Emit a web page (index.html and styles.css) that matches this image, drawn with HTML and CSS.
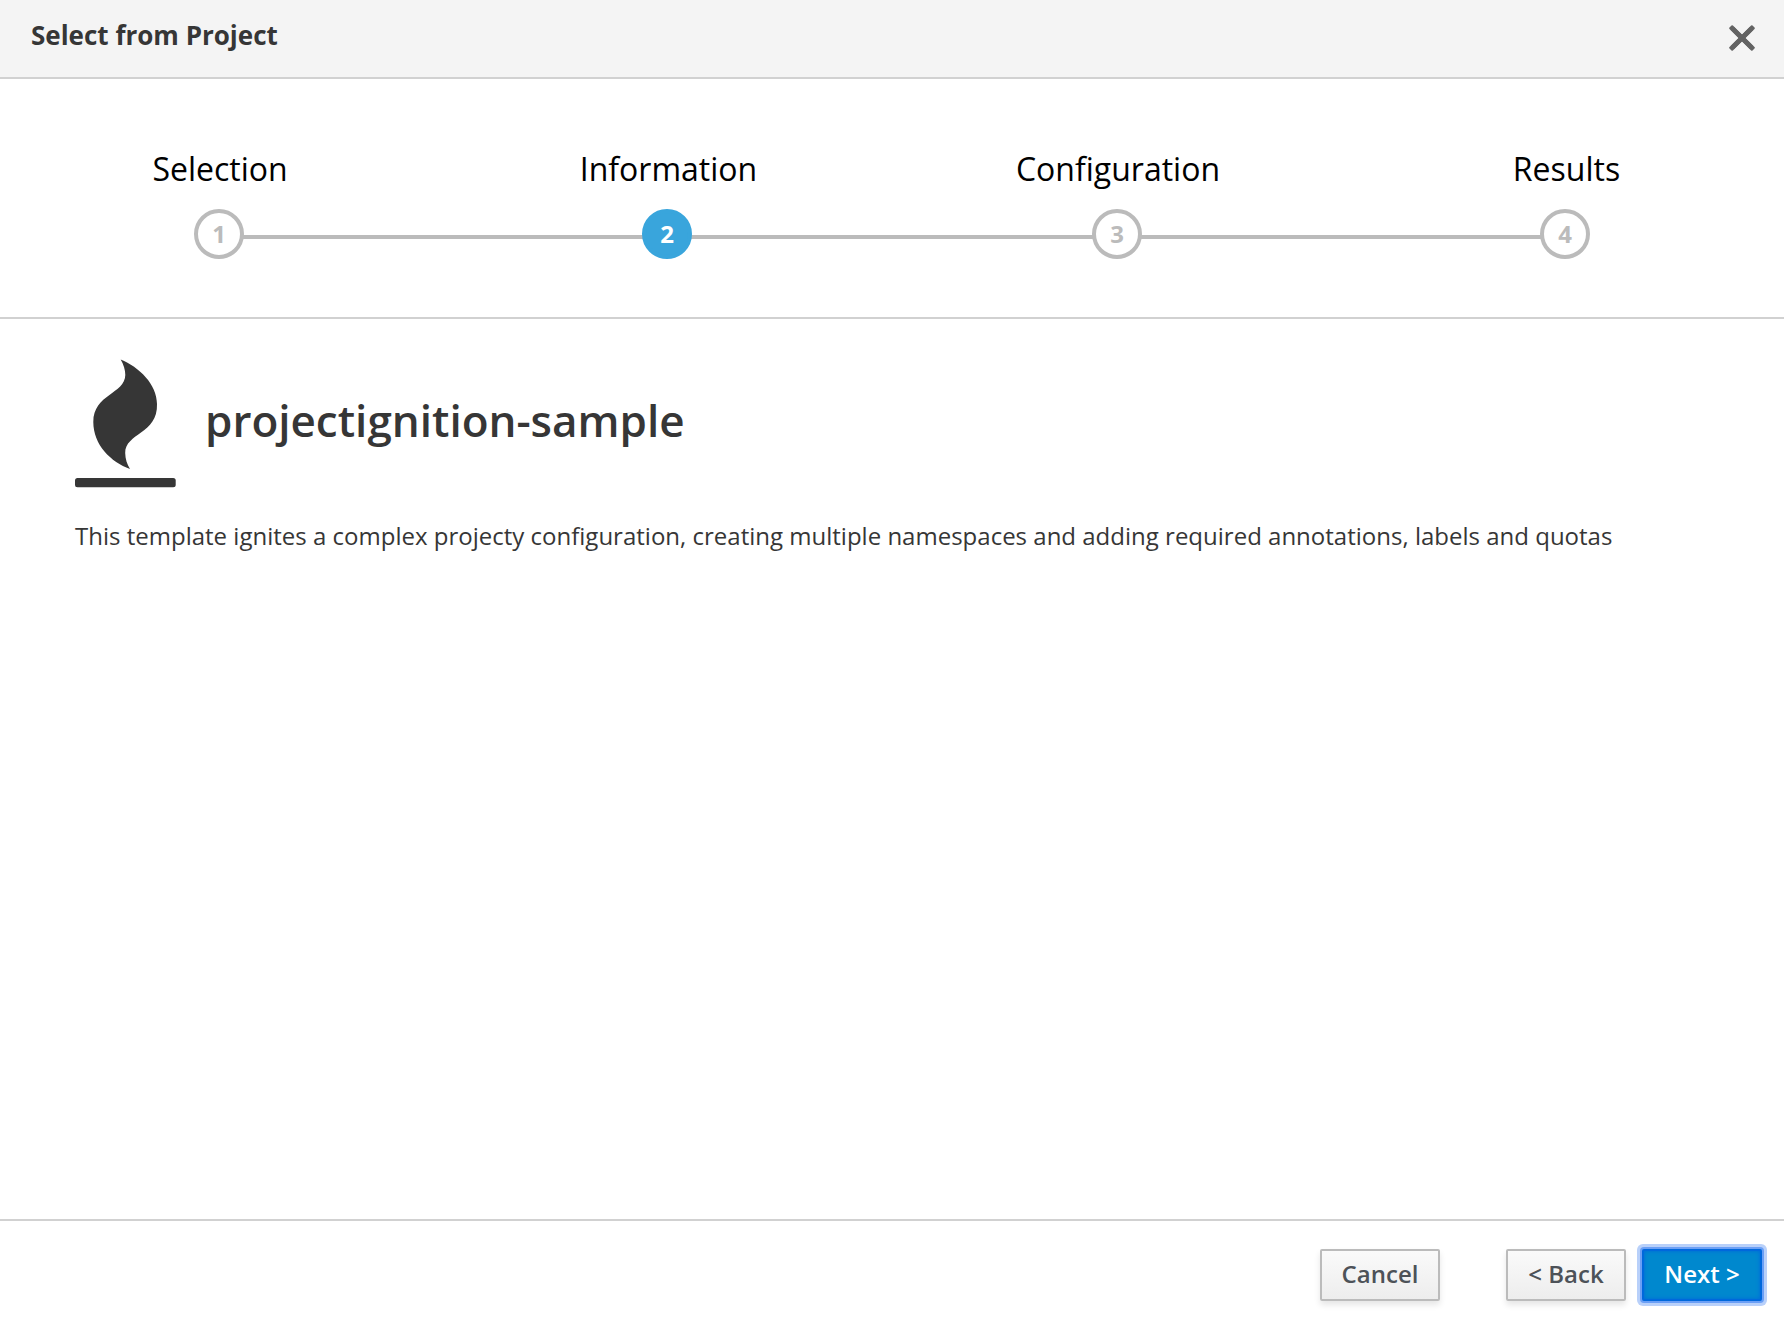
FILE: index.html
```html
<!DOCTYPE html>
<html lang="en">
<head>
<meta charset="utf-8">
<title>Select from Project</title>
<link rel="stylesheet" href="styles.css">
</head>
<body>
<div class="wizard">
  <header class="wizard-header">
    <h1 class="wizard-title">Select from Project</h1>
    <button class="close" aria-label="Close">
      <svg width="26" height="26" viewBox="0 0 26 26"><path d="M3.3 3.3 22.7 22.7M22.7 3.3 3.3 22.7" fill="none" stroke="#636363" stroke-width="4.6"/><path d="M3.2 1.2 1.2 3.2 22.8 24.8 24.8 22.8ZM22.8 1.2 24.8 3.2 3.2 24.8 1.2 22.8Z" fill="#636363" stroke="#636363" stroke-width="2" stroke-linejoin="round"/></svg>
    </button>
  </header>
  <ol class="steps">
    <li class="step"><span class="step-label">Selection</span><span class="step-number">1</span></li>
    <li class="step active"><span class="step-label">Information</span><span class="step-number">2</span></li>
    <li class="step"><span class="step-label">Configuration</span><span class="step-number">3</span></li>
    <li class="step"><span class="step-label">Results</span><span class="step-number">4</span></li>
  </ol>
  <main class="content">
    <div class="service">
      <svg class="service-icon" width="101" height="129" viewBox="0 0 101 129" fill="#363636">
        <path d="M45.7 .4C64 8 82 25 82 45C83 75 50 74 50.2 94C50.3 100 52 105 55 110C36 103 18.3 86 18.3 63C18.3 35 50 35 50.3 16C50.4 11 48.5 5 45.7 .4Z"/>
        <rect x="0" y="119" width="100.7" height="9.2" rx="2.5"/>
      </svg>
      <h2 class="service-name">projectignition-sample</h2>
    </div>
    <p class="description">This template ignites a complex projecty configuration, creating multiple namespaces and adding required annotations, labels and quotas</p>
  </main>
  <footer class="wizard-footer">
    <button class="btn btn-cancel">Cancel</button>
    <button class="btn">&lt; Back</button>
    <button class="btn btn-primary">Next &gt;</button>
  </footer>
</div>
</body>
</html>
```
FILE: styles.css
```css
* { box-sizing: border-box; }
body { margin: 0; background: #fff; color: #363636; font: 24px/40px "Open Sans", sans-serif; }
h1, h2, p, ol { margin: 0; padding: 0; }
.wizard { display: flex; flex-direction: column; height: 1326px; overflow: hidden; }
.wizard-header {
  display: flex; justify-content: space-between; align-items: flex-start;
  flex: none; height: 79px; padding: 15px 29px 0 31px;
  background: #f4f4f4; border-bottom: 2px solid #d1d1d1;
}
.wizard-title { font-size: 26px; line-height: 40px; font-weight: 700; }
.close { display: flex; margin-top: 10px; padding: 0; border: 0; background: none; }
.steps {
  display: grid; grid-template-columns: 448px 448px 452px 444px;
  flex: none; height: 240px; margin-left: -5px; padding-top: 68px;
  border-bottom: 2px solid #d1d1d1; list-style: none;
}
.step { position: relative; display: flex; flex-direction: column; align-items: center; gap: 18px; }
.step::before { content: ""; position: absolute; left: 0; right: 0; top: 88px; height: 4px; background: #bbb; }
.step:first-child::before { left: 50%; }
.step:last-child::before { right: 50%; }
.step-label { padding-left: 2px; color: #000; font-size: 32px; line-height: 44px; }
.step:nth-child(even) .step-label { padding-left: 3px; }
.step-number {
  position: relative; width: 50px; height: 50px; border: 4px solid #bbb; border-radius: 50%;
  background: #fff; color: #bbb; font-weight: 700; line-height: 42px; text-align: center;
}
.active .step-number { background: #39a5dc; border-color: #39a5dc; color: #fff; }
.content { flex: 1; padding: 40px 75px; }
.service { display: flex; align-items: center; gap: 29px; }
.service-name { padding-bottom: 8px; font-size: 44px; line-height: 60px; font-weight: 600; }
.description { margin-top: 28px; white-space: nowrap; letter-spacing: .005px; }
.wizard-footer {
  display: flex; justify-content: flex-end; gap: 16px;
  flex: none; height: 107px; padding: 28px 22px 0; border-top: 2px solid #d1d1d1;
}
.btn {
  width: 120px; height: 52px; padding: 0 0 2px; border: 2px solid #bbb; border-radius: 2px;
  background: linear-gradient(#fafafa, #ededed); box-shadow: 0 4px 6px rgba(3, 3, 3, .1);
  color: #4d5258; font: 600 24px/44px "Open Sans", sans-serif;
}
.btn-cancel { margin-right: 50px; }
.btn-primary {
  background: #0088ce; border-color: #0068dc; color: #fff;
  box-shadow: 0 0 0 2px #6b9ff5, 0 0 0 5px #b8d0fa, inset 0 0 4px #0068dc;
}
```
